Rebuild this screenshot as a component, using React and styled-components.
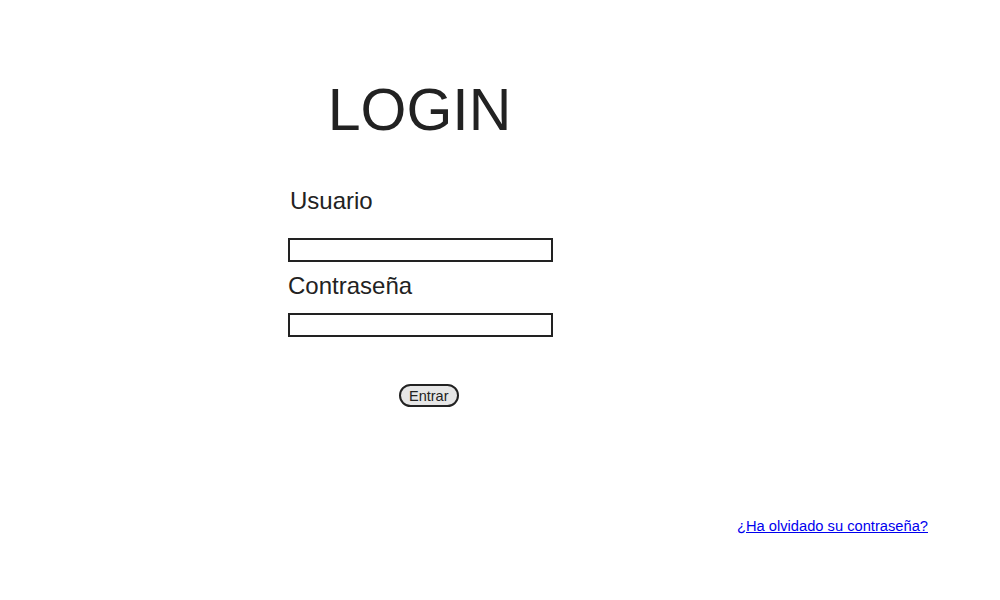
import React from 'react';
import styled, { createGlobalStyle } from 'styled-components';

const GlobalStyle = createGlobalStyle`
  html, body {
    margin: 0;
    padding: 0;
    background: #ffffff;
  }

  body {
    font-family: 'Liberation Sans', Arial, sans-serif;
    color: #222222;
  }
`;

const Page = styled.main`
  display: flex;
  flex-direction: column;
  width: 1000px;
  height: 600px;
  box-sizing: border-box;
  padding: 76px 72px 0 288px;
`;

const LoginForm = styled.form`
  display: flex;
  flex-direction: column;
  width: 265px;
`;

const Title = styled.h1`
  margin: 0 0 42px;
  padding-right: 2px;
  font-size: 59px;
  font-weight: normal;
  line-height: 69px;
  text-align: center;
  color: #222222;
`;

const Label = styled.label`
  margin: ${(p) => p.$top}px 0 0 ${(p) => p.$indent || 0}px;
  font-size: 24px;
  line-height: 28px;
  color: #222222;
`;

const Field = styled.input`
  width: 265px;
  height: 24px;
  margin-top: ${(p) => p.$top}px;
  box-sizing: border-box;
  border: 2px solid #222222;
  padding: 0 4px;
  font-family: inherit;
  font-size: 14px;
  background: #ffffff;
  outline: none;
`;

const SubmitRow = styled.div`
  display: flex;
  padding-left: 111px;
  margin-top: 47px;
`;

const SubmitButton = styled.button`
  height: 23px;
  box-sizing: border-box;
  padding: 0 8px;
  border: 2px solid #222222;
  border-radius: 12px;
  background: #e6e6e6;
  font-family: 'Liberation Sans', Arial, sans-serif;
  font-size: 14.5px;
  line-height: 18px;
  color: #222222;
  cursor: pointer;
`;

const Footer = styled.div`
  display: flex;
  justify-content: flex-end;
  margin-top: 111px;
`;

const ForgotLink = styled.a`
  font-size: 14.7px;
  line-height: 17px;
  color: #0000ee;
  text-decoration: underline;
`;

const App = () => {
  return (
    <>
      <GlobalStyle />
      <Page>
        <LoginForm onSubmit={(e) => e.preventDefault()}>
          <Title>LOGIN</Title>
          <Label htmlFor="usuario" $top={0} $indent={2}>
            Usuario
          </Label>
          <Field id="usuario" type="text" $top={23} />
          <Label htmlFor="clave" $top={10}>
            Contraseña
          </Label>
          <Field id="clave" type="password" $top={13} />
          <SubmitRow>
            <SubmitButton type="submit">Entrar</SubmitButton>
          </SubmitRow>
        </LoginForm>
        <Footer>
          <ForgotLink href="#">¿Ha olvidado su contraseña?</ForgotLink>
        </Footer>
      </Page>
    </>
  );
};

export default App;
